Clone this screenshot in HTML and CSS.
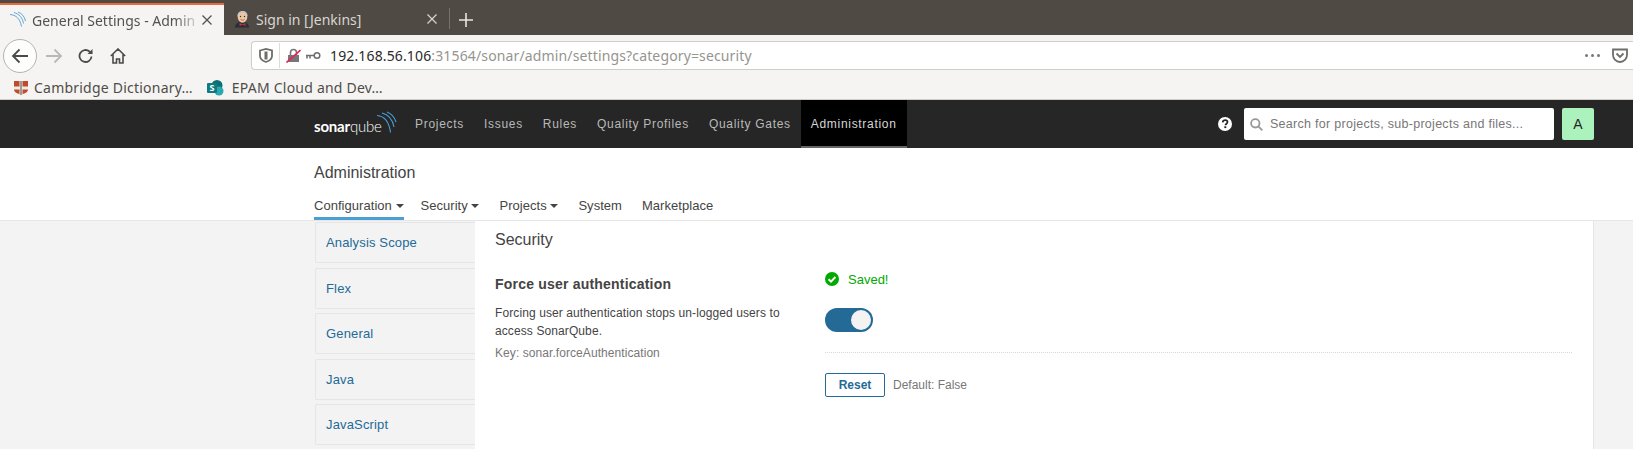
FILE: index.html

```html
<!DOCTYPE html>
<html lang="en">
<head>
  <meta charset="UTF-8">
  <title>General Settings - Administration</title>
  <link rel="stylesheet" href="styles.css">
</head>
<body>
  <div class="tabstrip">
    <div class="tab tab-active">
      <svg class="favicon" width="18" height="18" viewBox="0 0 18 18" fill="none" stroke="#5fa8d8" stroke-width="1"><path d="M1 3.500c6 .5 10 4 11.500 12"/><path d="M5 1.500c5 1.500 8.500 5 9.500 11"/><path d="M9 1c4 1.500 6.500 4.500 7.500 9"/></svg>
      <span class="tab-title tab-title-fade">General Settings - Admin</span>
      <svg class="tab-close" width="10" height="10" viewBox="0 0 10 10" stroke="#55524e" stroke-width="1.300"><path d="M.5.500l9 9M9.500.500l-9 9"/></svg>
    </div>
    <div class="tab">
      <svg class="favicon" width="18" height="18" viewBox="0 0 18 18"><path d="M2 17.500c0-3.500 2.500-5.500 7-5.500s7 2 7 5.500z" fill="#26303a"/><ellipse cx="9.500" cy="7" rx="4.800" ry="5.800" fill="#eec6a4"/><path d="M4.500 7C4 3 6.500 1 9.500 1s5.500 2 5 5.500c-1-2.500-3-3.500-5-3.500S5.500 4.500 4.500 7z" fill="#c9c6c2"/><circle cx="7.500" cy="6.500" r=".7" fill="#333"/><circle cx="11.500" cy="6.500" r=".7" fill="#333"/><path d="M7.500 9.500c1 .8 3 .8 4 0" fill="none" stroke="#9c5b3a" stroke-width=".8"/><path d="M6.500 13l3 1.300 3-1.300v3l-3-1.300-3 1.300z" fill="#c8302f"/></svg>
      <span class="tab-title">Sign in [Jenkins]</span>
      <svg class="tab-close" width="10" height="10" viewBox="0 0 10 10" stroke="#d5d3cf" stroke-width="1.300"><path d="M.5.500l9 9M9.500.500l-9 9"/></svg>
    </div>
    <div class="tab-sep"></div>
    <svg class="tab-new" width="14" height="14" viewBox="0 0 14 14" stroke="#e8e6e2" stroke-width="1.600"><path d="M7 0v14M0 7h14"/></svg>
  </div>

  <div class="toolbar">
    <div class="back-btn">
      <svg width="18" height="16" viewBox="0 0 18 16" fill="none" stroke="#4a4a48" stroke-width="1.800"><path d="M17 8H2M8.500 1.500L2 8l6.500 6.500"/></svg>
    </div>
    <svg class="tool-icon" width="18" height="16" viewBox="0 0 18 16" fill="none" stroke="#b9b8b6" stroke-width="1.800"><path d="M1 8h15M9.500 1.500L16 8l-6.500 6.500"/></svg>
    <svg class="tool-icon reload" width="16" height="16" viewBox="0 0 16 16" fill="none" stroke="#4a4a48" stroke-width="1.800"><path d="M13.500 8.500a6 6 0 1 1-2-5l2.500 2"/><path d="M14.500 1v5h-5" fill="#4a4a48" stroke="none"/></svg>
    <svg class="tool-icon home" width="16" height="16" viewBox="0 0 16 16" fill="none" stroke="#4a4a48" stroke-width="1.600"><path d="M.8 8L8 1l7.200 7M3 6.500V15h3.500v-4h3v4H13V6.500"/></svg>

    <div class="urlbar">
      <svg class="url-shield" width="14" height="15" viewBox="0 0 14 15" fill="none" stroke="#6d6d6b" stroke-width="1.800"><path d="M1 2.500L7 1l6 1.500V8c0 3-3 5-6 6-3-1-6-3-6-6z"/><path d="M7 3.500v8" stroke-width="3"/></svg>
      <div class="url-sep"></div>
      <svg class="url-lock" width="15" height="15" viewBox="0 0 15 15"><path d="M2 7h11v7H2z" fill="#77767a"/><path d="M4.500 7V4.500a3 3 0 0 1 6 0V7" fill="none" stroke="#77767a" stroke-width="1.600"/><path d="M.5 14.500L14.500 2" stroke="#e22850" stroke-width="1.600"/></svg>
      <svg class="url-key" width="16" height="9" viewBox="0 0 16 9" fill="none" stroke="#6d6d6b" stroke-width="1.500"><circle cx="12" cy="4.500" r="2.800"/><path d="M9 4.500H1M2 4.500v3M5 4.500v3"/></svg>
      <div class="url-text"><span class="url-host">192.168.56.106</span>:31564/sonar/admin/settings?category=security</div>
      <div class="url-dots"><i></i><i></i><i></i></div>
      <svg width="16" height="15" viewBox="0 0 16 15" fill="none" stroke="#6d6d6b" stroke-width="1.800"><path d="M1 1.500h14V7a7 7 0 0 1-14 0z"/><path d="M4.500 5.500L8 9l3.500-3.500"/></svg>
    </div>
  </div>

  <div class="bookmarks">
    <div class="bookmark">
      <svg width="16" height="16" viewBox="0 0 16 16"><path d="M1 1h14v8c0 3-3 5-7 6.500C4 14 1 12 1 9z" fill="#f0ebe0"/><path d="M1 1h5.500v5.500H1zM9.500 1H15v5.500H9.500zM1 9.500h5.500V14C3 13 1 11.500 1 9.500zM9.500 9.500H15c0 2-2 3.500-5.500 4.500z" fill="#c04a2e"/><path d="M8 1v14" stroke="#4a4a4a" stroke-width="1"/></svg>
      <span>Cambridge Dictionary…</span>
    </div>
    <div class="bookmark">
      <svg width="20" height="16" viewBox="0 0 20 16"><circle cx="10" cy="5.500" r="5.500" fill="#0d6f73"/><circle cx="12" cy="11" r="4.500" fill="#2aa8ad"/><rect x="0" y="3" width="10" height="10" rx="1" fill="#0f7b80"/><text x="2.500" y="11" class="sp-letter">S</text></svg>
      <span>EPAM Cloud and Dev…</span>
    </div>
  </div>

  <nav class="navbar">
    <div class="navbar-inner">
      <div class="logo">
        <span class="logo-text"><b>sonar</b>qube</span>
        <svg class="logo-waves" width="22" height="24" viewBox="0 0 22 24" fill="none" stroke="#4b9fd5" stroke-width="1.100"><path d="M1 4.500c7 .5 12 6 13.500 17"/><path d="M6 2c6 1.500 10.500 6 12 14"/><path d="M11 1c4 1.500 7.500 5 9 10"/></svg>
      </div>
      <a class="nav-link">Projects</a>
      <a class="nav-link">Issues</a>
      <a class="nav-link">Rules</a>
      <a class="nav-link">Quality Profiles</a>
      <a class="nav-link">Quality Gates</a>
      <a class="nav-link nav-link-active">Administration</a>
      <div class="nav-right">
        <svg class="help-icon" width="14" height="14" viewBox="0 0 14 14"><circle cx="7" cy="7" r="7" fill="#fff"/><path d="M4.700 5.300C4.900 3.900 5.900 3.200 7.200 3.200c1.400 0 2.300.8 2.300 1.900 0 1.700-2 1.600-2 3.200" fill="none" stroke="#262626" stroke-width="1.700"/><rect x="6.300" y="9.300" width="2" height="1.800" fill="#262626"/></svg>
        <div class="search-box">
          <svg width="13" height="13" viewBox="0 0 13 13" fill="none" stroke="#999" stroke-width="1.800"><circle cx="5.300" cy="5.300" r="4.200"/><path d="M8.300 8.300l4 4"/></svg>
          <span>Search for projects, sub-projects and files...</span>
        </div>
        <div class="avatar">A</div>
      </div>
    </div>
  </nav>

  <header class="page-head">
    <h1>Administration</h1>
    <ul class="admin-tabs">
      <li class="admin-tab admin-tab-active">Configuration <i class="caret"></i></li>
      <li class="admin-tab">Security <i class="caret"></i></li>
      <li class="admin-tab">Projects <i class="caret"></i></li>
      <li class="admin-tab">System</li>
      <li class="admin-tab">Marketplace</li>
    </ul>
  </header>

  <div class="settings">
    <ul class="side-menu">
      <li>Analysis Scope</li>
      <li>Flex</li>
      <li>General</li>
      <li>Java</li>
      <li>JavaScript</li>
    </ul>
    <main class="main-panel">
      <h2>Security</h2>
      <div class="setting">
        <div class="setting-info">
          <h3>Force user authentication</h3>
          <p>Forcing user authentication stops un-logged users to access SonarQube.</p>
          <div class="setting-key">Key: sonar.forceAuthentication</div>
        </div>
        <div class="setting-value">
          <div class="saved">
            <svg width="14" height="14" viewBox="0 0 14 14"><circle cx="7" cy="7" r="7" fill="#00aa00"/><path d="M3.600 7.200l2.400 2.400 4.400-4.600" fill="none" stroke="#fff" stroke-width="2"/></svg>
            <span>Saved!</span>
          </div>
          <div class="toggle"><div class="toggle-knob"></div></div>
          <div class="value-line"></div>
          <div class="reset-row">
            <button class="reset-btn">Reset</button>
            <span class="default-note">Default: False</span>
          </div>
        </div>
      </div>
    </main>
  </div>
</body>
</html>
```

FILE: styles.css

```css
* {
  box-sizing: border-box;
}
html, body {
  margin: 0;
  height: 449px;
  overflow: hidden;
}
body {
  font-family: "Liberation Sans", Arial, sans-serif;
  font-size: 12px;
  color: #444;
  background-color: #f3f3f3;
}
ul {
  list-style: none;
  margin: 0;
  padding: 0;
}

/* browser chrome */
.tabstrip {
  height: 35px;
  padding-top: 3px;
  display: flex;
  align-items: stretch;
  background-color: #4f4b44;
  font-family: "Noto Sans", sans-serif;
  font-size: 14px;
}
.tab {
  width: 225px;
  display: flex;
  align-items: center;
  padding: 0 12px 0 9px;
  color: #d8d6d2;
}
.tab-active {
  width: 224px;
  background-color: #f5f4f2;
  border-top: 2px solid #e9683c;
  color: #55524e;
}
.favicon {
  flex: none;
  margin-right: 5px;
}
.tab-title {
  flex: 1;
  overflow: hidden;
  white-space: nowrap;
}
.tab-title-fade {
  -webkit-mask-image: linear-gradient(to right, #000 84%, transparent 100%);
  mask-image: linear-gradient(to right, #000 84%, transparent 100%);
}
.tab-close {
  flex: none;
}
.tab-sep {
  width: 1px;
  margin: 5px 0 6px;
  background-color: #77736c;
}
.tab-new {
  margin: 10px 0 0 9px;
}
.toolbar {
  height: 41px;
  display: flex;
  align-items: center;
  padding-left: 3px;
  background-color: #f5f4f2;
}
.back-btn {
  width: 34px;
  height: 34px;
  flex: none;
  display: flex;
  align-items: center;
  justify-content: center;
  background-color: #fdfdfc;
  border: 1px solid #b5b3b0;
  border-radius: 50%;
}
.tool-icon {
  flex: none;
  margin-left: 8px;
}
.reload {
  margin-left: 15px;
}
.home {
  margin-left: 16px;
  margin-right: 125px;
}
.urlbar {
  flex: 1;
  height: 29px;
  display: flex;
  align-items: center;
  padding: 0 5px 0 7px;
  background-color: #fff;
  border: 1px solid #d0cec9;
  border-right: none;
  border-radius: 4px 0 0 4px;
}
.url-sep {
  width: 1px;
  height: 25px;
  margin: 0 6px;
  background-color: #dcdbd8;
}
.url-lock {
  margin-right: 4px;
}
.url-key {
  margin-right: 9px;
}
.url-text {
  flex: 1;
  font-family: "Noto Sans", sans-serif;
  font-size: 14px;
  letter-spacing: .14px;
  color: #96948f;
  white-space: nowrap;
}
.url-host {
  color: #2b2a28;
}
.url-dots {
  display: flex;
  gap: 3px;
  margin-right: 12px;
}
.url-dots i {
  width: 3px;
  height: 3px;
  border-radius: 50%;
  background-color: #77767a;
}
.bookmarks {
  height: 24px;
  display: flex;
  align-items: center;
  gap: 14px;
  padding-left: 13px;
  background-color: #f5f4f2;
  border-bottom: 1px solid #cfcdc9;
  font-family: "Noto Sans", sans-serif;
  font-size: 14px;
  letter-spacing: .22px;
  color: #4f4c48;
}
.bookmark {
  display: flex;
  align-items: center;
  gap: 5px;
}
.sp-letter {
  font-size: 9px;
  font-weight: 700;
  fill: #fff;
}

/* sonarqube top bar */
.navbar {
  height: 48px;
  background-color: #262626;
  padding-left: 314px;
}
.navbar-inner {
  width: 1280px;
  height: 48px;
  display: flex;
  align-items: stretch;
}
.logo {
  width: 91px;
  display: flex;
  align-items: center;
  position: relative;
}
.logo-text {
  font-family: Lato, sans-serif;
  font-size: 15px;
  font-weight: 300;
  color: #fff;
  letter-spacing: -.2px;
  margin-top: 3px;
}
.logo-text b {
  font-weight: 700;
}
.logo-waves {
  position: absolute;
  left: 62px;
  top: 11px;
}
.nav-link {
  display: flex;
  align-items: center;
  padding: 0 10px;
  font-size: 12px;
  letter-spacing: .7px;
  color: #b9b9b9;
}
.nav-link-active {
  background-color: #000;
  color: #d6d6d6;
  border-bottom: 2px solid #666;
  padding-top: 2px;
}
.nav-right {
  margin-left: auto;
  display: flex;
  align-items: center;
}
.help-icon {
  margin-right: 12px;
}
.search-box {
  width: 310px;
  height: 32px;
  display: flex;
  align-items: center;
  gap: 7px;
  padding-left: 6px;
  background-color: #fff;
  border-radius: 2px;
  font-size: 12.500px;
  letter-spacing: .28px;
  color: #777;
}
.avatar {
  width: 32px;
  height: 32px;
  margin-left: 8px;
  display: flex;
  align-items: center;
  justify-content: center;
  background-color: #abf2bc;
  border-radius: 2px;
  font-size: 14px;
  color: #262626;
}

/* admin header */
.page-head {
  height: 73px;
  padding: 16px 0 0 314px;
  background-color: #fff;
  border-bottom: 1px solid #e6e6e6;
}
.page-head h1 {
  margin: 0;
  font-size: 16px;
  line-height: 18px;
  font-weight: 400;
  color: #444;
}
.admin-tabs {
  display: flex;
  gap: 20px;
  margin-top: 15px;
}
.admin-tab {
  height: 23px;
  padding-top: 1px;
  font-size: 13px;
  line-height: 16px;
  letter-spacing: .04px;
  color: #444;
}
.admin-tab-active {
  margin-right: -3px;
  border-bottom: 3px solid #4b9fd5;
}
.caret {
  display: inline-block;
  vertical-align: 2px;
  border-top: 4px solid #444;
  border-left: 4px solid transparent;
  border-right: 4px solid transparent;
}

/* settings */
.settings {
  display: flex;
  align-items: flex-start;
  height: 228px;
  padding-left: 315px;
}
.side-menu {
  width: 160px;
  flex: none;
  padding-top: 1px;
}
.side-menu li {
  height: 41px;
  margin-bottom: 4.500px;
  padding-left: 10px;
  display: flex;
  align-items: center;
  font-size: 13px;
  letter-spacing: .15px;
  color: #236a97;
  border: 1px solid #e6e6e6;
  border-right: none;
  border-radius: 2px 0 0 2px;
}
.main-panel {
  width: 1119px;
  height: 228px;
  padding: 10px 21px 0 20px;
  background-color: #fff;
  border-right: 1px solid #e6e6e6;
}
.main-panel h2 {
  margin: 0;
  font-size: 16px;
  line-height: 18px;
  font-weight: 400;
  color: #444;
}
.setting {
  display: flex;
  margin-top: 26px;
}
.setting-info {
  width: 330px;
  flex: none;
}
.setting-info h3 {
  margin: 0 0 11px;
  font-size: 14px;
  line-height: 18px;
  font-weight: 700;
  letter-spacing: .2px;
  color: #444;
}
.setting-info p {
  margin: 0;
  width: 300px;
  font-size: 12px;
  line-height: 18px;
  letter-spacing: .1px;
  color: #444;
}
.setting-key {
  margin-top: 4px;
  font-size: 12px;
  line-height: 18px;
  letter-spacing: .07px;
  color: #777;
}
.setting-value {
  flex: 1;
}
.saved {
  display: flex;
  align-items: center;
  gap: 9px;
  height: 16px;
  margin-top: -4px;
  font-size: 13px;
  color: #00aa00;
}
.toggle {
  width: 48px;
  height: 24px;
  margin-top: 21px;
  padding: 2px;
  display: flex;
  justify-content: flex-end;
  background-color: #236a97;
  border-radius: 12px;
}
.toggle-knob {
  width: 20px;
  height: 20px;
  background-color: #f3f3f3;
  border-radius: 50%;
}
.value-line {
  margin-top: 20px;
  border-top: 1px dotted #d8d8d8;
}
.reset-row {
  display: flex;
  align-items: center;
  gap: 8px;
  margin-top: 20px;
}
.reset-btn {
  width: 60px;
  height: 24px;
  padding: 0;
  font-family: inherit;
  font-size: 12px;
  font-weight: 700;
  color: #236a97;
  background-color: #fff;
  border: 1px solid #236a97;
  border-radius: 2px;
}
.default-note {
  font-size: 12px;
  color: #777;
}
```
